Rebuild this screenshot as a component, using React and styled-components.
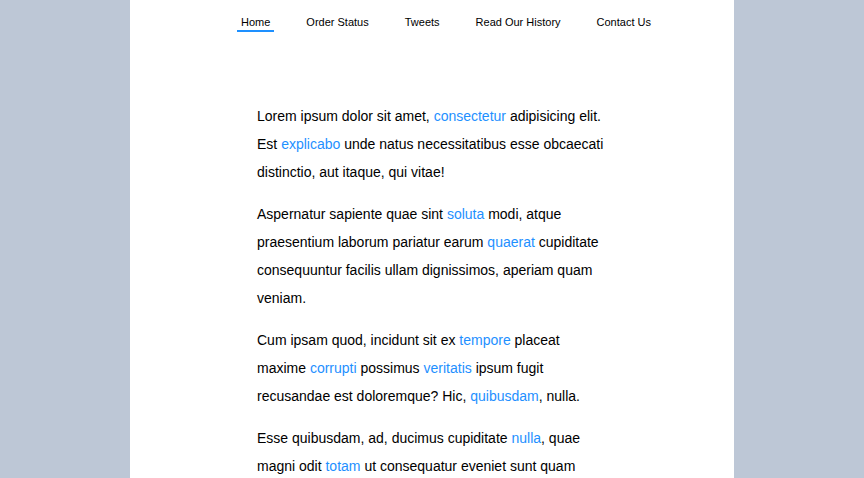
import React from 'react';
import styled, { createGlobalStyle } from 'styled-components';

const GlobalStyle = createGlobalStyle`
  body {
    margin: 0;
    background-color: #bdc7d6;
    font-family: "Liberation Sans", Arial, sans-serif;
    color: #000;
  }
`;

const navItems = ['Home', 'Order Status', 'Tweets', 'Read Our History', 'Contact Us'];

function App() {
    return (
        <>
            <GlobalStyle />
            <Pagina>
                <Menu>
                    {navItems.map((item, i) => (
                        <MenuLink key={item} href="#" $ativo={i === 0}>{item}</MenuLink>
                    ))}
                </Menu>
                <Artigo>
                    <p>
                        Lorem ipsum dolor sit amet, <Destaque href="#">consectetur</Destaque> adipisicing elit.
                        Est <Destaque href="#">explicabo</Destaque> unde natus necessitatibus esse obcaecati
                        distinctio, aut itaque, qui vitae!
                    </p>
                    <p>
                        Aspernatur sapiente quae sint <Destaque href="#">soluta</Destaque> modi, atque
                        praesentium laborum pariatur earum <Destaque href="#">quaerat</Destaque> cupiditate
                        consequuntur facilis ullam dignissimos, aperiam quam veniam.
                    </p>
                    <p>
                        Cum ipsam quod, incidunt sit ex <Destaque href="#">tempore</Destaque> placeat
                        maxime <Destaque href="#">corrupti</Destaque> possimus <Destaque href="#">veritatis</Destaque> ipsum fugit
                        recusandae est doloremque? Hic, <Destaque href="#">quibusdam</Destaque>, nulla.
                    </p>
                    <p>
                        Esse quibusdam, ad, ducimus cupiditate <Destaque href="#">nulla</Destaque>, quae
                        magni odit <Destaque href="#">totam</Destaque> ut consequatur eveniet sunt quam
                        provident sapiente dicta neque quod.
                    </p>
                </Artigo>
            </Pagina>
        </>
    );
}

const Pagina = styled.div`
  width: 604px;
  margin: 0 auto;
  min-height: 100vh;
  background-color: #fff;
`;

const Menu = styled.nav`
  display: flex;
  justify-content: center;
  gap: 28px;
  padding: 14px 0 0 28px;
`;

const MenuLink = styled.a`
  display: block;
  padding: 0 4px;
  font-size: 11px;
  line-height: 16px;
  color: #000;
  text-decoration: none;
  border-bottom: 2px solid ${props => props.$ativo ? '#1e90ff' : 'transparent'};
`;

const Artigo = styled.article`
  width: 350px;
  margin: 70px auto 0;

  p {
    margin: 0 0 14px;
    font-size: 14px;
    line-height: 28px;
  }
`;

const Destaque = styled.a`
  color: #1e90ff;
  text-decoration: none;
`;

export default App;
